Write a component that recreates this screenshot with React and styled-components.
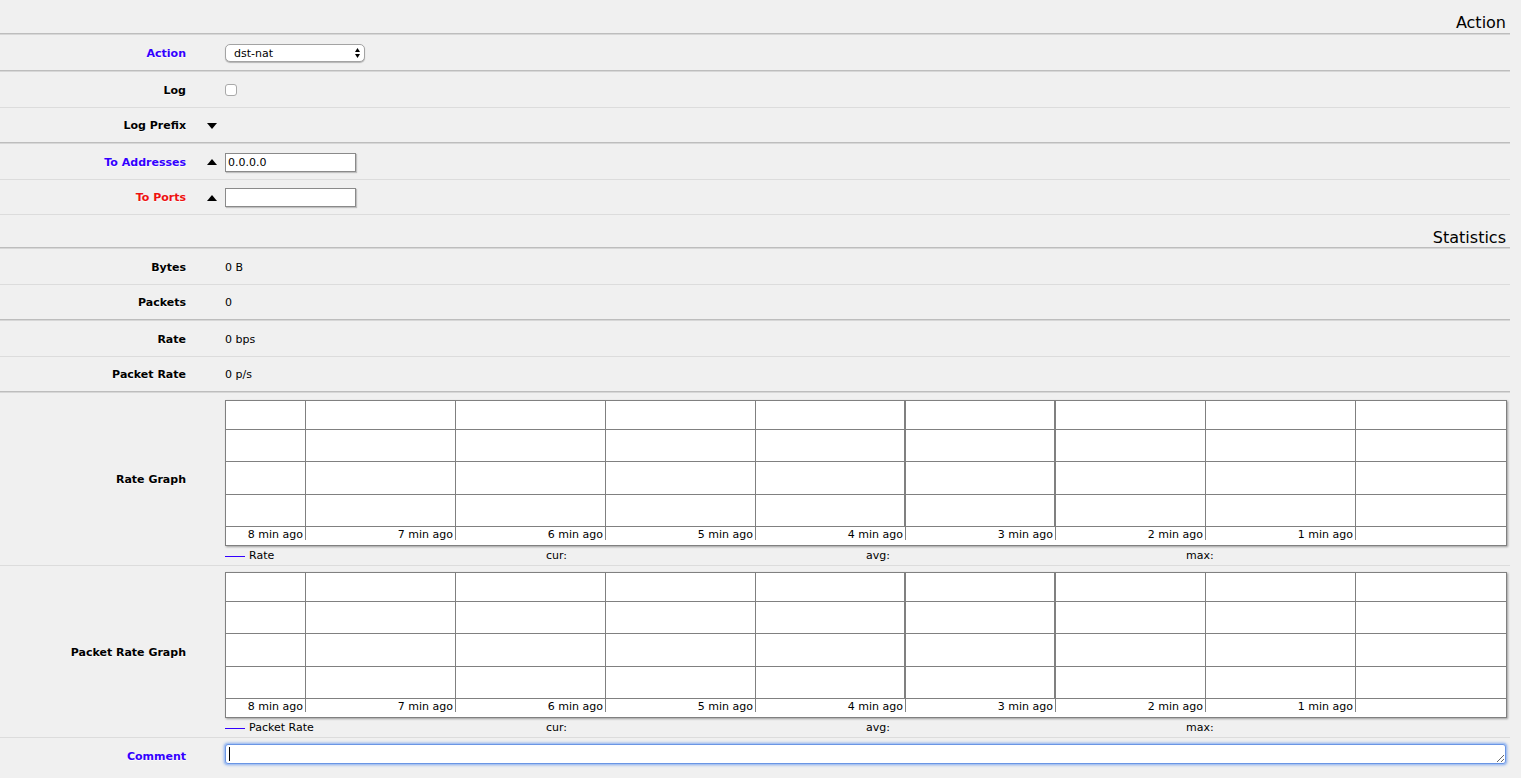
import React from 'react';
import styled, { createGlobalStyle } from 'styled-components';

const GlobalStyle = createGlobalStyle`
    html, body {
        margin: 0;
        padding: 0;
        background: #f0f0f0;
    }
    body {
        font-family: 'DejaVu Sans', Verdana, sans-serif;
        font-size: 11px;
        color: #000;
    }
`;

const Page = styled.div`
    width: 1510px;
`;

const Section = styled.section`
    border-bottom: ${(p) => (p.$ruled ? '1px solid #dcdcdc' : 'none')};
`;

const SectionTitle = styled.div`
    height: ${(p) => (p.$compact ? '20px' : '21px')};
    padding: 13px 4px 0 0;
    text-align: right;
    font-size: 16px;
    line-height: 19px;
    box-sizing: content-box;
    margin-bottom: -1px;
`;

const Group = styled.div`
    padding-top: 1px;
    border-top: 1px solid #bdbdbd;
    box-shadow: inset 0 1px 0 #d7d7d7;
`;

const Row = styled.div`
    display: grid;
    grid-template-columns: 186px 39px 1fr;
    align-items: center;
    padding-top: 1px;
    min-height: 34px;
    & + & {
        min-height: 33px;
        border-top: 1px solid #dcdcdc;
    }
`;

const toneColor = {
    blue: '#3300ff',
    red: '#ee1111',
};

const Label = styled.div`
    text-align: right;
    font-weight: bold;
    color: ${(p) => toneColor[p.$tone] || '#000'};
    text-shadow: 0 1px 0 rgba(255, 255, 255, 0.8);
`;

const Toggle = styled.span`
    justify-self: end;
    margin-right: 8px;
    width: 0;
    height: 0;
    border-left: 5px solid transparent;
    border-right: 5px solid transparent;
    ${(p) => (p.$up ? 'border-bottom: 6px solid #000;' : 'border-top: 6px solid #000;')}
`;

const Value = styled.div`
    display: flex;
    flex-direction: column;
    align-items: flex-start;
    padding: ${(p) => p.$pad || '0'};
`;

const SelectWrap = styled.div`
    position: relative;
    width: 140px;
    height: 18px;
`;

const Select = styled.select`
    appearance: none;
    display: block;
    box-sizing: border-box;
    width: 140px;
    height: 18px;
    margin: 0;
    padding: 0 0 0 8px;
    border: 1px solid #a3a3a3;
    border-radius: 5px;
    background: #fff;
    box-shadow: 0 1px 1px rgba(0, 0, 0, 0.25);
    font-family: 'DejaVu Sans', Verdana, sans-serif;
    font-size: 11px;
    color: #000;
`;

const SelectArrows = styled.svg`
    position: absolute;
    right: 5px;
    top: 4px;
    pointer-events: none;
`;

const Checkbox = styled.input`
    appearance: none;
    display: block;
    width: 12px;
    height: 12px;
    margin: 0;
    border: 1px solid #a9a9a9;
    border-radius: 3px;
    background: #fff;
`;

const TextInput = styled.input`
    display: block;
    box-sizing: border-box;
    width: 131px;
    height: 19px;
    margin: 0;
    padding: 0 2px;
    border: 1px solid #8a8a8a;
    background: #fff;
    box-shadow: 1px 1px 1px rgba(0, 0, 0, 0.2);
    font-family: 'DejaVu Sans', Verdana, sans-serif;
    font-size: 11px;
    color: #000;
`;

const Graph = styled.div`
    width: 1280px;
    border: 1px solid #808080;
    background: #fff;
    box-shadow: 1px 1px 2px rgba(0, 0, 0, 0.35);
`;

const Plot = styled.svg`
    display: block;
`;

const Ticks = styled.div`
    display: flex;
    height: 18px;
    border-top: 1px solid #808080;
`;

const Tick = styled.div`
    flex: ${(p) => (p.$w ? `0 0 ${p.$w}px` : '1 1 auto')};
    box-sizing: border-box;
    height: 13px;
    padding-top: 1px;
    line-height: 13px;
    padding-right: 2px;
    text-align: right;
    border-right: ${(p) => (p.$w ? '1px solid #808080' : 'none')};
    white-space: nowrap;
`;

const Legend = styled.div`
    display: grid;
    grid-template-columns: repeat(4, 320px);
    height: 16px;
    padding-top: 2px;
    line-height: 16px;
`;

const LegendCell = styled.span`
    display: flex;
    align-items: center;
    padding-left: ${(p) => (p.$first ? '0' : '1px')};
`;

const LegendKey = styled.span`
    width: 20px;
    height: 1px;
    margin-right: 4px;
    background: #3300ff;
`;

const CommentWrap = styled.div`
    position: relative;
`;

const Comment = styled.textarea`
    display: block;
    box-sizing: border-box;
    width: 1281px;
    height: 20px;
    margin: 0;
    padding: 2px 3px;
    border: 1px solid #6a95e4;
    border-radius: 3px;
    background: #fff;
    box-shadow: 0 0 0 1px #a9c4f1, 0 0 3px 1px #7fa5ea;
    outline: none;
    overflow: hidden;
    caret-color: transparent;
    font-family: 'DejaVu Sans', Verdana, sans-serif;
    font-size: 11px;
    line-height: 13px;
`;

const Caret = styled.span`
    position: absolute;
    left: 4px;
    top: 3px;
    width: 1px;
    height: 14px;
    background: #000;
    pointer-events: none;
`;

const ticks = ['8 min ago', '7 min ago', '6 min ago', '5 min ago', '4 min ago', '3 min ago', '2 min ago', '1 min ago'];

function TrafficGraph({ name }) {
    const cols = [0, 1, 2, 3, 4, 5, 6, 7];
    return (
        <>
            <Graph>
                <Plot width="1280" height="125" viewBox="0 0 1280 125">
                    {[28, 60, 93].map((y) => (
                        <line key={y} x1="0" x2="1280" y1={y + 0.5} y2={y + 0.5} stroke="#808080" strokeWidth="1" />
                    ))}
                    {cols.map((i) => {
                        const thick = i === 4 || i === 5;
                        const x = 79 + i * 150 + (thick ? 0 : 0.5);
                        return <line key={i} x1={x} x2={x} y1="0" y2="125" stroke="#808080" strokeWidth={thick ? 2 : 1} />;
                    })}
                </Plot>
                <Ticks>
                    {ticks.map((t, i) => (
                        <Tick key={t} $w={i === 0 ? 80 : 150}>{t}</Tick>
                    ))}
                    <Tick />
                </Ticks>
            </Graph>
            <Legend>
                <LegendCell $first>
                    <LegendKey />
                    {name}
                </LegendCell>
                <LegendCell>cur:</LegendCell>
                <LegendCell>avg:</LegendCell>
                <LegendCell>max:</LegendCell>
            </Legend>
        </>
    );
}

function App() {
    return (
        <Page>
            <GlobalStyle />
            <Section $ruled>
                <SectionTitle>Action</SectionTitle>
                <Group>
                    <Row>
                        <Label $tone="blue">Action</Label>
                        <span />
                        <Value>
                            <SelectWrap>
                                <Select defaultValue="dst-nat">
                                    <option value="dst-nat">dst-nat</option>
                                    <option value="src-nat">src-nat</option>
                                    <option value="masquerade">masquerade</option>
                                </Select>
                                <SelectArrows width="5" height="10" viewBox="0 0 5 10">
                                    <polygon points="0,4 2.5,0 5,4" fill="#000" />
                                    <polygon points="0,6 2.5,10 5,6" fill="#000" />
                                </SelectArrows>
                            </SelectWrap>
                        </Value>
                    </Row>
                </Group>
                <Group>
                    <Row>
                        <Label>Log</Label>
                        <span />
                        <Value>
                            <Checkbox type="checkbox" />
                        </Value>
                    </Row>
                    <Row>
                        <Label>Log Prefix</Label>
                        <Toggle />
                        <Value />
                    </Row>
                </Group>
                <Group>
                    <Row>
                        <Label $tone="blue">To Addresses</Label>
                        <Toggle $up />
                        <Value>
                            <TextInput type="text" defaultValue="0.0.0.0" />
                        </Value>
                    </Row>
                    <Row>
                        <Label $tone="red">To Ports</Label>
                        <Toggle $up />
                        <Value>
                            <TextInput type="text" defaultValue="" />
                        </Value>
                    </Row>
                </Group>
            </Section>
            <Section>
                <SectionTitle $compact>Statistics</SectionTitle>
                <Group>
                    <Row>
                        <Label>Bytes</Label>
                        <span />
                        <Value>0 B</Value>
                    </Row>
                    <Row>
                        <Label>Packets</Label>
                        <span />
                        <Value>0</Value>
                    </Row>
                </Group>
                <Group>
                    <Row>
                        <Label>Rate</Label>
                        <span />
                        <Value>0 bps</Value>
                    </Row>
                    <Row>
                        <Label>Packet Rate</Label>
                        <span />
                        <Value>0 p/s</Value>
                    </Row>
                </Group>
                <Group>
                    <Row>
                        <Label>Rate Graph</Label>
                        <span />
                        <Value $pad="6px 0 1px">
                            <TrafficGraph name="Rate" />
                        </Value>
                    </Row>
                    <Row>
                        <Label>Packet Rate Graph</Label>
                        <span />
                        <Value $pad="5px 0 1px">
                            <TrafficGraph name="Packet Rate" />
                        </Value>
                    </Row>
                    <Row>
                        <Label $tone="blue">Comment</Label>
                        <span />
                        <Value $pad="5px 0 9px">
                            <CommentWrap>
                                <Comment autoFocus defaultValue="" />
                                <Caret />
                            </CommentWrap>
                        </Value>
                    </Row>
                </Group>
            </Section>
        </Page>
    );
}

export default App;
